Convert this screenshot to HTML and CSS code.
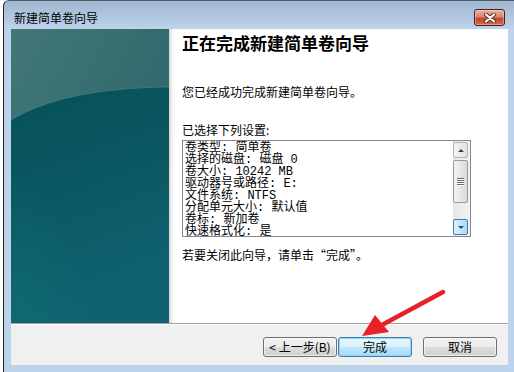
FILE: index.html
```html
<!DOCTYPE html>
<html lang="zh-CN">
<head>
    <meta charset="UTF-8">
    <title>新建简单卷向导</title>
    <link rel="stylesheet" href="styles.css">
</head>
<body>
    <div class="window">
        <!-- 标题栏 -->
        <div class="titlebar">
            <span class="title">新建简单卷向导</span>
            <button class="close" aria-label="关闭">
                <svg width="14" height="10" viewBox="0 0 14 10">
                    <path d="M3 1.5 L11 8.5 M11 1.5 L3 8.5" stroke="#5a2a24" stroke-width="4" stroke-linecap="round"/>
                    <path d="M3 1.5 L11 8.5 M11 1.5 L3 8.5" stroke="#fff" stroke-width="2.2" stroke-linecap="round"/>
                </svg>
            </button>
        </div>

        <div class="client">
            <div class="main">
                <!-- 左侧图片 -->
                <div class="banner">
                    <svg width="158" height="294" viewBox="0 0 158 294">
                        <defs>
                            <linearGradient id="sky" x1="0" y1="0" x2="1" y2="1">
                                <stop offset="0" stop-color="#417776"/>
                                <stop offset="1" stop-color="#265f66"/>
                            </linearGradient>
                            <linearGradient id="sea" x1="0" y1="0" x2="0.25" y2="1">
                                <stop offset="0" stop-color="#075059"/>
                                <stop offset="0.5" stop-color="#0a5862"/>
                                <stop offset="1" stop-color="#106273"/>
                            </linearGradient>
                            <radialGradient id="glow" cx="0" cy="1" r="0.5">
                                <stop offset="0" stop-color="#0f6d70" stop-opacity="0.7"/>
                                <stop offset="1" stop-color="#0f6d70" stop-opacity="0"/>
                            </radialGradient>
                        </defs>
                        <rect width="158" height="294" fill="url(#sky)"/>
                        <path d="M0 91 C35 70 85 59 158 58 V294 H0 Z" fill="url(#sea)"/>
                        <rect width="158" height="294" fill="url(#glow)"/>
                        <path d="M0 91 C35 70 85 59 158 58" stroke="#5a8e8c" stroke-opacity="0.5" fill="none"/>
                    </svg>
                </div>

                <!-- 向导内容 -->
                <div class="content">
                    <h1>正在完成新建简单卷向导</h1>
                    <p class="intro">您已经成功完成新建简单卷向导。</p>
                    <p class="label">已选择下列设置:</p>
                    <div class="listbox">
                        <div class="list-text">
                            <div>卷类型: 简单卷</div>
                            <div>选择的磁盘: 磁盘 0</div>
                            <div>卷大小: 10242 MB</div>
                            <div>驱动器号或路径: E:</div>
                            <div>文件系统: NTFS</div>
                            <div>分配单元大小: 默认值</div>
                            <div>卷标: 新加卷</div>
                            <div>快速格式化: 是</div>
                        </div>
                        <div class="scrollbar">
                            <div class="sb-btn sb-up"><span class="tri-up"></span></div>
                            <div class="sb-thumb">
                                <span></span><span></span><span></span><span></span>
                            </div>
                            <div class="sb-track"></div>
                            <div class="sb-btn sb-down"><span class="tri-down"></span></div>
                        </div>
                    </div>
                    <p class="hint">若要关闭此向导，请单击“完成”。</p>
                </div>
            </div>

            <!-- 底部按钮 -->
            <div class="footer">
                <button class="btn">&lt; 上一步(B)</button>
                <button class="btn btn-default">完成</button>
                <button class="btn btn-cancel">取消</button>
            </div>
        </div>
    </div>

    <!-- 红色箭头标注 -->
    <svg class="arrow" width="514" height="372" viewBox="0 0 514 372">
        <path d="M443 292 L380 326" stroke="#e8202a" stroke-width="4.5" stroke-linecap="round"/>
        <path d="M362 336 L375 315 L389 332 Z" fill="#e8202a"/>
    </svg>
</body>
</html>
```

FILE: styles.css
```css
body {
    margin: 0;
    width: 514px;
    height: 372px;
    overflow: hidden;
    background-color: #fff;
    font-family: "Noto Sans CJK SC", sans-serif;
    font-size: 12px;
    color: #000;
    position: relative;
}
.window {
    margin-left: 3px;
    height: 372px;
    box-sizing: border-box;
    border-left: 1px solid #202020;
    border-top: 1px solid #4a5a6a;
    border-top-left-radius: 6px;
    background: linear-gradient(#a1b7cf, #bdd3eb 28px, #bcd3ec);
    padding: 0 6px 7px 7px;
    display: flex;
    flex-direction: column;
}
.titlebar {
    height: 28px;
    display: flex;
    justify-content: space-between;
    flex: none;
}
.title {
    padding: 9px 0 0 3px;
    line-height: 16px;
}
.close {
    margin: 8px 3px 0 0;
    width: 31px;
    height: 17px;
    padding: 0;
    border: 1px solid #4c1d1a;
    border-radius: 3px;
    background: linear-gradient(#eab0a2, #d98673 45%, #c2472f 55%, #d56a4f);
    display: flex;
    align-items: center;
    justify-content: center;
    box-shadow: inset 0 0 0 1px rgba(255, 255, 255, 0.35);
}
.close svg {
    display: block;
}
.client {
    flex: 1;
    display: flex;
    flex-direction: column;
}
.main {
    height: 294px;
    display: flex;
    border-bottom: 1px solid #a0a0a0;
    flex: none;
}
.banner {
    width: 158px;
    flex: none;
}
.banner svg {
    display: block;
}
.content {
    flex: 1;
    background: linear-gradient(90deg, #d2d2d2, #f4f4f4 3px, #fff 6px);
    padding-left: 13px;
}
h1 {
    margin: 0;
    padding-top: 4px;
    font-size: 17px;
    line-height: 20px;
    font-weight: bold;
}
.intro, .label, .hint {
    margin: 0;
    line-height: 16px;
}
.intro {
    margin-top: 31px;
}
.label {
    margin-top: 22px;
}
.hint {
    margin-top: 10px;
}
.listbox {
    margin-top: 2px;
    width: 289px;
    height: 97px;
    box-sizing: border-box;
    border: 1px solid #828790;
    display: flex;
    overflow: hidden;
}
.list-text {
    flex: 1;
    padding: 1px 0 0 2px;
    font-family: "Liberation Mono", "Noto Sans CJK SC", monospace;
    font-size: 12px;
    line-height: 12px;
    overflow: hidden;
    white-space: nowrap;
}
.scrollbar {
    width: 17px;
    flex: none;
    box-sizing: border-box;
    padding: 1px 2px 1px 0;
    display: flex;
    flex-direction: column;
    background: linear-gradient(90deg, #e6e6e6, #f2f2f2);
}
.sb-btn {
    height: 16px;
    box-sizing: border-box;
    border: 1px solid #b5b5b5;
    border-radius: 2px;
    background: linear-gradient(90deg, #f4f4f4, #e2e2e2);
    display: flex;
    align-items: center;
    justify-content: center;
}
.sb-down {
    border-color: #3c7fb1;
    background: linear-gradient(90deg, #dff1fc, #aad8f4);
}
.tri-up, .tri-down {
    width: 0;
    height: 0;
    border-left: 3px solid transparent;
    border-right: 3px solid transparent;
}
.tri-up {
    border-bottom: 3px solid #404040;
}
.tri-down {
    border-top: 3px solid #1c4f7a;
}
.sb-thumb {
    margin-top: 2px;
    height: 43px;
    box-sizing: border-box;
    border: 1px solid #999;
    border-radius: 2px;
    background: linear-gradient(90deg, #f3f3f3, #dadada);
    display: flex;
    flex-direction: column;
    align-items: center;
    justify-content: center;
    gap: 1px;
}
.sb-thumb span {
    width: 7px;
    height: 1px;
    background-color: #6a6a6a;
    box-shadow: 0 1px 0 #fff;
}
.sb-track {
    flex: 1;
}
.footer {
    flex: 1;
    border-top: 1px solid #fff;
    background-color: #f0f0f0;
    display: flex;
    justify-content: flex-end;
    align-items: flex-start;
    padding: 12px 11px 0 0;
}
.btn {
    width: 74px;
    height: 20px;
    padding: 0;
    font-family: "Noto Sans CJK SC", sans-serif;
    font-size: 12px;
    line-height: 16px;
    color: #000;
    border: 1px solid #707070;
    border-radius: 3px;
    background: linear-gradient(#f2f2f2, #ebebeb 48%, #dddddd 52%, #cfcfcf);
    box-shadow: inset 0 0 0 1px rgba(255, 255, 255, 0.6);
}
.btn-default {
    margin-left: 1px;
    border-color: #3c7fb1;
    background: linear-gradient(#eaf6fd, #d9f0fc 48%, #bee6fd 52%, #a7d9f5);
    box-shadow: inset 0 0 0 1px #8fd6f7;
}
.btn-cancel {
    margin-left: 11px;
}
.arrow {
    position: absolute;
    left: 0;
    top: 0;
    pointer-events: none;
}
```
